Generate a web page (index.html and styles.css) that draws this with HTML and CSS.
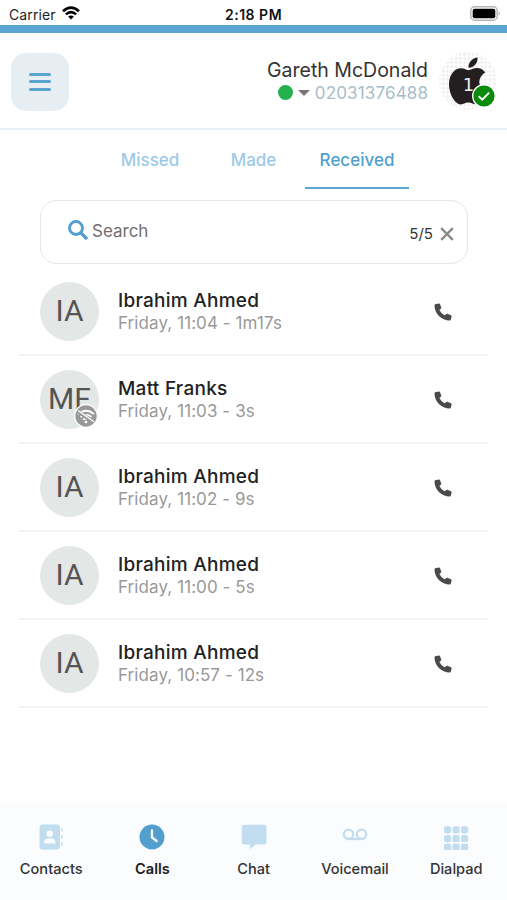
FILE: index.html
```html
<!DOCTYPE html>
<html lang="en">
<head>
<meta charset="utf-8">
<title>Calls</title>
<link rel="stylesheet" href="styles.css">
</head>
<body>
<svg class="defs" width="0" height="0">
  <symbol id="phone" viewBox="0 0 18 18"><path d="M1.2 1.3 4.8.4Q5.6.3 6 1L7.2 4.600Q7.400 5.300 6.800 5.800L5.400 7Q7.100 10.500 10.800 12.500L12.200 11Q12.700 10.500 13.300 10.700L17 12.200Q17.700 12.600 17.600 13.300L16.800 16.800Q16.600 17.500 15.800 17.500C7.200 17.400.5 10.500.5 2.200Q.5 1.500 1.200 1.300Z"/></symbol>
</svg>
<div class="status">
  <span class="carrier">Carrier</span>
  <svg class="wifi" viewBox="0 0 18 14" width="18" height="14" fill="none" stroke="#000" stroke-width="2.6"><path d="M1 5.300Q9-2.200 17 5.300M3.900 8.400Q9 3.700 14.100 8.400"/><path d="M9 13.500 6.100 10.600Q9 8.200 11.900 10.600Z" fill="#000" stroke="none"/></svg>
  <span class="time">2:18 PM</span>
  <svg class="battery" viewBox="0 0 31 15" width="31" height="15"><rect x=".8" y=".8" width="26.400" height="13.400" rx="4" fill="#fff" stroke="#b5b5b5" stroke-width="1.500"/><rect x="2.700" y="2.700" width="22.600" height="9.600" rx="2" /><path d="M28.700 5.200Q31 7.500 28.700 9.800Z" fill="#aaa"/></svg>
</div>
<header class="header">
  <button class="menu" aria-label="Menu"><span></span><span></span><span></span></button>
  <div class="user">
    <div class="user-name">Gareth McDonald</div>
    <div class="user-line"><i class="dot"></i><i class="caret"></i><span class="number">02031376488</span></div>
  </div>
  <div class="profile">
    <svg viewBox="0 0 58 58" width="58" height="58">
      <defs><pattern id="checks" width="6" height="6" patternUnits="userSpaceOnUse" patternTransform="rotate(45)"><rect width="6" height="6" fill="#fff"/><path d="M0 0h3v3H0zM3 3h3v3H3z" fill="#f1f1f1"/></pattern></defs>
      <circle cx="29" cy="29" r="29" fill="url(#checks)"/>
      <path d="M38.500 5.500C39 11.500 34.500 16 29.500 15.800 29 10.500 33.500 6 38.500 5.500Z" fill="#231f20"/>
      <path d="M29.500 18.200C32 18.200 34 16 38 16 41.500 16 44.600 17.800 46.300 20.500 37.500 26 39 36 47.500 39.500 45 46 41 52.300 37 52.300 34 52.300 32.700 50.500 29.300 50.500 26 50.500 24.400 52.400 21.800 52.400 16 52.400 10 42 10 32.300 10 22 16 16.300 22 16.300 25.300 16.300 27.500 18.200 29.500 18.200Z" fill="#231f20"/>
    </svg>
    <span class="initial">1</span>
    <svg class="check" viewBox="0 0 24 24" width="24" height="24"><circle cx="12" cy="12" r="11.300" fill="#0b8a0b" stroke="#fff" stroke-width="1.400"/><path d="m6.700 12.200 3.500 3.400 7-7" fill="none" stroke="#fff" stroke-width="1.900"/></svg>
  </div>
</header>
<nav class="tabs">
  <a class="tab missed">Missed</a><a class="tab made">Made</a><a class="tab received">Received</a>
</nav>
<div class="search">
  <svg class="lens" viewBox="0 0 20 20" width="20" height="20" fill="none" stroke="#519ecf"><circle cx="8" cy="8" r="6.500" stroke-width="2.900"/><path d="m12.900 12.900 5.100 5.100" stroke-width="3.400" stroke-linecap="round"/></svg>
  <span class="placeholder">Search</span>
  <span class="count">5/5</span>
  <svg class="clear" viewBox="0 0 14 14" width="14" height="14" stroke="#8b8b8b" stroke-width="2.400"><path d="m1.200 1.200 11.600 11.600M12.800 1.200 1.200 12.800"/></svg>
</div>
<main class="calls">
  <div class="call"><div class="avatar">IA</div><div class="info"><div class="name">Ibrahim Ahmed</div><div class="detail">Friday, 11:04 - 1m17s</div></div><svg class="phone"><use href="#phone"/></svg></div>
  <div class="call"><div class="avatar">MF
    <svg class="offline" viewBox="0 0 24 24" width="24" height="24" fill="none" stroke="#fff"><circle cx="12" cy="12" r="11.400" fill="#999" stroke-width="1.400"/><path d="M4 10Q12 3.500 20 10M6.500 13Q12 8.700 17.500 13M9 15.600Q12 13.500 15 15.600" stroke-width="1.700"/><circle cx="12" cy="18" r="1.300" fill="#fff" stroke="none"/><path d="m3.500 7 16 11.300" stroke="#999" stroke-width="3.500"/><path d="m4 6.500 16 11.300" stroke-width="1.400"/></svg>
  </div><div class="info"><div class="name">Matt Franks</div><div class="detail">Friday, 11:03 - 3s</div></div><svg class="phone"><use href="#phone"/></svg></div>
  <div class="call"><div class="avatar">IA</div><div class="info"><div class="name">Ibrahim Ahmed</div><div class="detail">Friday, 11:02 - 9s</div></div><svg class="phone"><use href="#phone"/></svg></div>
  <div class="call"><div class="avatar">IA</div><div class="info"><div class="name">Ibrahim Ahmed</div><div class="detail">Friday, 11:00 - 5s</div></div><svg class="phone"><use href="#phone"/></svg></div>
  <div class="call"><div class="avatar">IA</div><div class="info"><div class="name">Ibrahim Ahmed</div><div class="detail">Friday, 10:57 - 12s</div></div><svg class="phone"><use href="#phone"/></svg></div>
</main>
<footer class="bottom">
  <a class="item"><svg viewBox="0 0 26 26"><rect x="1.500" y=".5" width="20.500" height="25" rx="3"/><path d="M23.200 4.200h1.600v3h-1.600zM23.200 11.200h1.600v3.200h-1.600zM23.200 18.200h1.600v3.200h-1.600z"/><g fill="#fafcfe"><circle cx="11.700" cy="9.800" r="3.200"/><path d="M6.300 19.500v-1q0-4 3.500-4h4q3.500 0 3.500 4v1z"/></g></svg><span>Contacts</span></a>
  <a class="item active"><svg viewBox="0 0 26 26"><circle cx="13" cy="13" r="12.500"/><path d="M13 6.500V13.500L17.600 17" fill="none" stroke="#fafcfe" stroke-width="2.400" stroke-linecap="round"/></svg><span>Calls</span></a>
  <a class="item"><svg viewBox="0 0 26 26"><path d="M3 .8H23.500Q25.500.8 25.500 2.800V18.500Q25.500 20.500 23.500 20.500H14.500L9 25.200V20.500H3Q.8 20.500.8 18.500V2.800Q.8.8 3 .8Z"/></svg><span>Chat</span></a>
  <a class="item"><svg viewBox="0 0 26 26" class="line"><circle cx="6.500" cy="10.300" r="4.700"/><circle cx="19.500" cy="10.300" r="4.700"/><path d="M6.500 15h13"/></svg><span>Voicemail</span></a>
  <a class="item"><svg viewBox="0 0 26 26"><g id="row"><rect x="1" y="2.300" width="7.200" height="7.200" rx="2.200"/><rect x="9.500" y="2.300" width="7.200" height="7.200" rx="2.200"/><rect x="18" y="2.300" width="7.200" height="7.200" rx="2.200"/></g><use href="#row" y="8.600"/><use href="#row" y="17.200"/></svg><span>Dialpad</span></a>
</footer>
</body>
</html>
```
FILE: styles.css
```css
* { box-sizing: border-box; }
body { margin: 0; width: 507px; height: 900px; overflow: hidden; display: flex; flex-direction: column; background: #fff; font-family: Inter, "Liberation Sans", sans-serif; color: #333; }
.defs { position: absolute; }
.status { height: 25px; flex: none; display: grid; grid-template-columns: 53px 172px 1fr 31px; padding: 0 6px 0 9px; align-items: center; color: #222; font-size: 14px; line-height: 25px; }
.carrier { letter-spacing: .1px; padding-top: 2px; }
.wifi { margin-bottom: 1px; }
.time { font-weight: 600; color: #111; padding-top: 1px; margin-left: -9px; letter-spacing: .5px; }
.header { height: 105px; flex: none; border-top: 8px solid #5aa5d4; border-bottom: 2px solid #e8eff8; display: flex; align-items: center; padding: 0 10px 0 11px; }
.menu { width: 58px; height: 58px; border: 0; border-radius: 15px; background: #e6eef4; padding: 0; display: flex; flex-direction: column; gap: 4.500px; align-items: center; justify-content: center; margin-top: 2px; }
.menu span { width: 22px; height: 3px; border-radius: 2px; background: #5aa5cf; }
.user { margin-left: auto; margin-right: 11px; text-align: right; }
.user-name { font-size: 19.500px; line-height: 24px; white-space: nowrap; }
.user-line { display: flex; align-items: center; justify-content: flex-end; height: 22px; }
.dot { width: 15px; height: 15px; border-radius: 50%; background: #22b14c; margin-right: 5px; }
.caret { border: 6px solid transparent; border-top: 6px solid #777; border-bottom: 0; margin-right: 5px; }
.number { font-size: 17px; letter-spacing: .15px; margin-right: -.15px; color: #a9bdca; }
.profile { width: 58px; height: 58px; position: relative; }
.profile > svg { display: block; }
.initial { position: absolute; left: 0; width: 59px; top: 18px; text-align: center; color: #eee; font: 18px/30px "DejaVu Sans", sans-serif; }
.profile .check { position: absolute; left: 33px; top: 32px; }
.tabs { height: 59px; flex: none; display: flex; padding-left: 106px; font-size: 17px; font-weight: 500; color: #9ccae6; }
.tab { height: 59px; line-height: 60px; text-align: center; }
.missed { width: 88px; margin-right: 22px; }
.made { width: 75px; margin-right: 14px; }
.received { width: 104px; color: #529fcf; border-bottom: 2px solid #5aa5d4; }
.search { width: 428px; height: 64px; flex: none; margin: 11px 0 4px 40px; border: 1.500px solid #e6e6e6; border-radius: 17px; display: flex; align-items: center; padding: 0 13px 0 27px; }
.placeholder { margin-left: 4px; margin-top: -2px; font-size: 17px; color: #707070; }
.search > svg { flex: none; }
.lens { margin-top: -5px; }
.count { margin-left: auto; margin-right: 7px; font-size: 15px; padding-top: 2px; }
.clear { margin-top: 4px; }
.calls { width: 469px; margin-left: 19px; flex: 1; }
.call { height: 88px; border-bottom: 2px solid #f2f3f4; display: flex; align-items: center; padding: 0 36px 0 21px; }
.avatar { width: 59px; height: 59px; border-radius: 50%; background: #e3e8e7; text-align: center; font: 30px/58px Roboto, sans-serif; color: #555; position: relative; }
.offline { position: absolute; right: 1px; bottom: 1px; }
.info { margin-left: 19px; flex: 1; padding-top: 1px; }
.name { font-size: 19px; line-height: 23px; font-weight: 500; letter-spacing: .26px; color: #222; }
.detail { font-size: 17px; line-height: 23px; letter-spacing: .08px; color: #999; }
.phone { width: 18px; height: 18px; fill: #4a4a4a; margin-top: 2px; }
.bottom { height: 97px; flex: none; background: #fafcfe; display: grid; grid-template-columns: repeat(5, 101.250px); padding: 21px 0 0 .6px; }
.item { display: flex; flex-direction: column; align-items: center; font-size: 14.600px; font-weight: 500; color: #333; }
.item svg { width: 26px; height: 26px; fill: #c2ddef; }
.item span { margin-top: 9px; line-height: 20px; }
.active { font-weight: 600; color: #222; }
.item.active svg { fill: #529fce; }
.item svg.line { fill: none; stroke: #c2ddef; stroke-width: 2.300px; }
```
